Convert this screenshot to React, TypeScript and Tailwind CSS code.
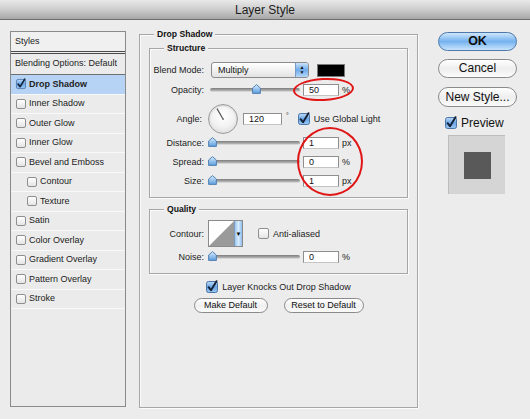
import React from 'react';

const font = { fontFamily: '"Liberation Sans", Arial, sans-serif' };

function Check({ on = false, small = false }: { on?: boolean; small?: boolean }) {
  const s = small ? 10 : 12;
  if (on) {
    return (
      <svg width={s} height={s} viewBox="0 0 12 12" className="shrink-0 overflow-visible">
        <defs>
          <linearGradient id="cb" x1="0" y1="0" x2="0" y2="1">
            <stop offset="0" stopColor="#bfdcf8" />
            <stop offset="0.5" stopColor="#6aa6e6" />
            <stop offset="1" stopColor="#9cc8f2" />
          </linearGradient>
        </defs>
        <rect x="0.5" y="0.5" width="11" height="11" rx="2" fill="url(#cb)" stroke="#4d76a6" />
        <path d="M2.6 6.2 L5 9.2 L10.5 0.2" fill="none" stroke="#152338" strokeWidth="2" strokeLinecap="round" strokeLinejoin="round" />
      </svg>
    );
  }
  return (
    <div
      className={`${small ? 'w-[10px] h-[10px]' : 'w-[11px] h-[11px]'} shrink-0 rounded-[2px] border border-[#8e8e8e] bg-gradient-to-b from-[#ffffff] to-[#e4e4e4]`}
    />
  );
}

function Thumb() {
  return (
    <svg width="9" height="10" viewBox="0 0 9 10" className="shrink-0">
      <defs>
        <linearGradient id="th" x1="0" y1="0" x2="0" y2="1">
          <stop offset="0" stopColor="#d8ecfc" />
          <stop offset="1" stopColor="#5c9ee0" />
        </linearGradient>
      </defs>
      <path d="M4.5 0.6 L8.4 4 L8.4 9.4 L0.6 9.4 L0.6 4 Z" fill="url(#th)" stroke="#4a78aa" strokeWidth="0.9" />
    </svg>
  );
}

function Slider({ pos }: { pos: number }) {
  return (
    <div className="relative w-[92px] h-[12px] flex items-center">
      <div className="ml-[2px] w-[90px] h-[4px] rounded-full bg-gradient-to-b from-[#7c7c7c] to-[#b9b9b9] border-b border-[#d6d6d6]" />
      <div className="absolute top-[0px]" style={{ left: pos }}>
        <Thumb />
      </div>
    </div>
  );
}

function Field({ value, w = 'w-[36px]' }: { value: string; w?: string }) {
  return (
    <div className={`${w} h-[12px] bg-white border border-[#8f8f8f] border-b-[#c4c4c4] text-[9px] leading-[10px] pl-[5px] text-[#111]`}>
      {value}
    </div>
  );
}

function Label({ children, w = 'w-[54px]' }: { children: React.ReactNode; w?: string }) {
  return <div className={`${w} text-right text-[9px] leading-[12px] text-[#222] shrink-0`}>{children}</div>;
}

function Unit({ children }: { children: React.ReactNode }) {
  return <span className="ml-[3px] text-[9px] leading-[12px] text-[#222]">{children}</span>;
}

function Box({ title, className, children }: { title: string; className: string; children: React.ReactNode }) {
  return (
    <div className={`relative border border-[#a6a6a6] shadow-[inset_1px_1px_0_#fbfbfb,1px_1px_0_#fbfbfb] ${className}`}>
      <span className="absolute -top-[7px] left-[14px] bg-[#ececec] px-[3px] text-[8.6px] font-bold text-[#111] leading-[12px]">
        {title}
      </span>
      {children}
    </div>
  );
}

function Row({ children }: { children: React.ReactNode }) {
  return <div className="flex items-center">{children}</div>;
}

function SliderRow({ label, pos, value, unit }: { label: string; pos: number; value: string; unit: string }) {
  return (
    <Row>
      <Label>{label}</Label>
      <div className="ml-[4px]">
        <Slider pos={pos} />
      </div>
      <div className="ml-[3px]">
        <Field value={value} />
      </div>
      <Unit>{unit}</Unit>
    </Row>
  );
}

const styles = [
  { name: 'Drop Shadow', on: true },
  { name: 'Inner Shadow' },
  { name: 'Outer Glow' },
  { name: 'Inner Glow' },
  { name: 'Bevel and Emboss' },
  { name: 'Contour', sub: true },
  { name: 'Texture', sub: true },
  { name: 'Satin' },
  { name: 'Color Overlay' },
  { name: 'Gradient Overlay' },
  { name: 'Pattern Overlay' },
  { name: 'Stroke' },
];

export default function App() {
  return (
    <div className="relative w-[530px] h-[419px] bg-[#ececec] flex flex-col overflow-hidden" style={font}>
      {/* title bar */}
      <div className="h-[20px] shrink-0 flex items-center justify-center bg-gradient-to-b from-[#e9e9e9] via-[#cdcdcd] to-[#a7a7a7] border-b border-[#6f6f6f] text-[12px] text-[#1c1c1c]">
        Layer Style
      </div>

      <div className="flex flex-1">
        {/* styles list */}
        <div className="ml-[10px] mt-[11px] w-[116px] h-[376px] border border-[#8a8a8a] bg-[#ebebeb] flex flex-col">
          <div className="h-[22px] shrink-0 flex items-center pl-[4px] text-[9px] text-[#222] bg-[#f0f0f0] border-b-[3px] border-double border-[#4a4a4a]">
            Styles
          </div>
          <div className="h-[21px] shrink-0 flex items-center pl-[4px] text-[9px] text-[#222] border-b border-[#707070]">
            Blending Options: Default
          </div>
          {styles.map((s) => (
            <div
              key={s.name}
              className={`h-[19.5px] shrink-0 flex items-center gap-[3px] border-b border-[#f9f9f9] text-[9px] text-[#222] ${
                s.sub ? 'pl-[16px]' : 'pl-[5px]'
              } ${s.on ? 'bg-[#b6d3f6] font-bold' : ''}`}
            >
              <Check on={s.on} small />
              <span>{s.name}</span>
            </div>
          ))}
        </div>

        {/* main settings */}
        <Box title="Drop Shadow" className="ml-[13px] mt-[14px] w-[279px] h-[374px] flex flex-col px-[9px] pt-[13px]">
          <Box title="Structure" className="h-[150px] shrink-0 flex flex-col pt-[13px]">
            <Row>
              <Label>Blend Mode:</Label>
              <div className="ml-[7px] w-[98px] h-[16px] flex rounded-[3px] border border-[#8c8c8c] overflow-hidden bg-gradient-to-b from-[#ffffff] via-[#f2f2f2] to-[#e2e2e2]">
                <div className="flex-1 pl-[6px] text-[9px] leading-[14px] text-[#111]">Multiply</div>
                <div className="w-[13px] flex flex-col items-center justify-center bg-gradient-to-b from-[#c9e2fa] via-[#6eaaea] to-[#b7d8f7] border-l border-[#7b9cc2] text-[#111] text-[5px] leading-[5px]">
                  <span>▲</span>
                  <span>▼</span>
                </div>
              </div>
              <div className="ml-[8px] w-[28px] h-[13px] bg-black border border-[#7a7a7a]" />
            </Row>
            <div className="mt-[6px]">
              <SliderRow label="Opacity:" pos={44} value="50" unit="%" />
            </div>
            <div className="mt-[8px]">
              <Row>
                <Label w="w-[52px]">Angle:</Label>
                <div className="ml-[6px] w-[30px] h-[30px] rounded-full border border-[#9c9c9c] bg-[radial-gradient(circle_at_50%_40%,#ffffff_0%,#f2f2f2_50%,#d2d2d2_100%)] shadow-[inset_0_1px_2px_rgba(0,0,0,0.15)] relative">
                  <svg width="30" height="30" viewBox="0 0 30 30" className="absolute -left-[1px] -top-[1px]">
                    <line x1="15" y1="15" x2="9" y2="4.6" stroke="#555" strokeWidth="1.2" />
                    <circle cx="15" cy="15" r="1" fill="#777" />
                  </svg>
                </div>
                <div className="ml-[5px]">
                  <Field value="120" w="w-[39px]" />
                </div>
                <span className="ml-[4px] -mt-[6px] text-[7px] leading-[8px] text-[#222]">°</span>
                <div className="ml-[9px] flex items-center gap-[4px]">
                  <Check on />
                  <span className="text-[9px] leading-[12px] text-[#222]">Use Global Light</span>
                </div>
              </Row>
            </div>
            <div className="mt-[3px]">
              <SliderRow label="Distance:" pos={0} value="1" unit="px" />
            </div>
            <div className="mt-[7px]">
              <SliderRow label="Spread:" pos={0} value="0" unit="%" />
            </div>
            <div className="mt-[7px]">
              <SliderRow label="Size:" pos={0} value="1" unit="px" />
            </div>
          </Box>

          <Box title="Quality" className="mt-[11px] h-[65px] shrink-0 flex flex-col pt-[10px]">
            <Row>
              <Label>Contour:</Label>
              <div className="ml-[4px] w-[35px] h-[27px] border border-[#8a8a8a] flex bg-white">
                <svg width="25" height="25" viewBox="0 0 25 25" className="shrink-0">
                  <polygon points="0,25 25,0 25,25" fill="#9a9a9a" />
                </svg>
                <div className="flex-1 flex items-center justify-center bg-gradient-to-r from-[#9cc6f0] via-[#d9ecfd] to-[#8dbcec] border-l border-[#7b9cc2]">
                  <span className="text-[6px] leading-[6px] text-black">▼</span>
                </div>
              </div>
              <div className="ml-[15px] flex items-center gap-[4px]">
                <Check />
                <span className="text-[9px] leading-[12px] text-[#222]">Anti-aliased</span>
              </div>
            </Row>
            <div className="mt-[4px]">
              <SliderRow label="Noise:" pos={0} value="0" unit="%" />
            </div>
          </Box>

          <div className="mt-[7px] flex items-center justify-center gap-[4px]">
            <Check on />
            <span className="text-[9px] leading-[12px] text-[#222]">Layer Knocks Out Drop Shadow</span>
          </div>
          <div className="mt-[5px] flex justify-center gap-[16px]">
            <button className="w-[74px] h-[15px] rounded-full border border-[#8a8a8a] bg-gradient-to-b from-[#ffffff] via-[#f0f0f0] to-[#fafafa] text-[9px] text-[#111] leading-[13px]">
              Make Default
            </button>
            <button className="w-[80px] h-[15px] rounded-full border border-[#8a8a8a] bg-gradient-to-b from-[#ffffff] via-[#f0f0f0] to-[#fafafa] text-[9px] text-[#111] leading-[13px]">
              Reset to Default
            </button>
          </div>
        </Box>

        {/* buttons */}
        <div className="ml-[20px] mt-[12px] w-[79px] flex flex-col">
          <button className="h-[19px] rounded-full border border-[#4d79aa] bg-gradient-to-b from-[#cfe6fc] via-[#74b2ee] to-[#c8e4fd] text-[12.5px] font-bold text-[#0e0e0e] leading-[17px]">
            OK
          </button>
          <button className="mt-[8px] h-[19px] rounded-full border border-[#8a8a8a] bg-gradient-to-b from-[#ffffff] via-[#eeeeee] to-[#fbfbfb] text-[12px] text-[#111] leading-[17px]">
            Cancel
          </button>
          <button className="mt-[9px] h-[20px] rounded-full border border-[#8a8a8a] bg-gradient-to-b from-[#ffffff] via-[#eeeeee] to-[#fbfbfb] text-[12px] text-[#111] leading-[18px]">
            New Style...
          </button>
          <div className="mt-[10px] ml-[7px] flex items-center gap-[4px]">
            <Check on />
            <span className="text-[12px] leading-[12px] text-[#111]">Preview</span>
          </div>
          <div className="mt-[6px] ml-[10px] w-[57px] h-[59px] bg-[#d5d5d5] border-l border-t border-[#bdbdbd] flex items-center justify-center">
            <div className="w-[27px] h-[27px] bg-[#595959]" />
          </div>
        </div>
      </div>

      {/* red annotation circles */}
      <div className="absolute left-[293px] top-[78px] w-[61px] h-[23px] rounded-[50%] border-2 border-[#e01515] -rotate-3" />
      <div className="absolute left-[297px] top-[127px] w-[66px] h-[69px] rounded-[50%] border-2 border-[#e01515]" />
    </div>
  );
}
